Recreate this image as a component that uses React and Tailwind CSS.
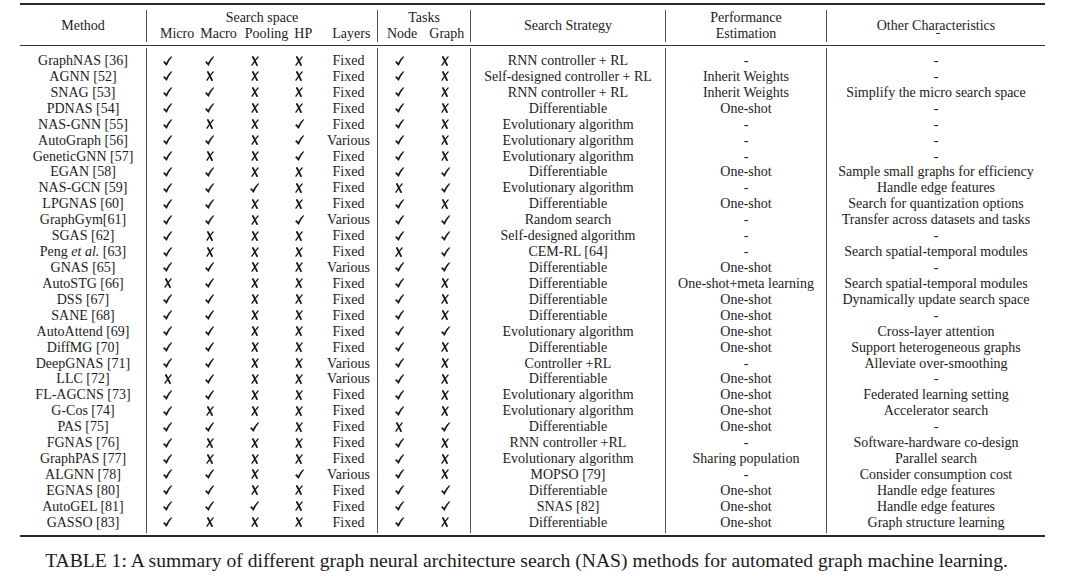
import React from 'react'

// column widths follow the reference: Method | Micro Macro Pooling HP Layers | Node Graph | Strategy | Perf | Other
const COLS = 'grid grid-cols-[126px_42px_43px_47px_42px_57px_43px_50px_195px_161px_219px]'
const LINE = 'border-l border-[#555]'

const rows = [
  ['GraphNAS [36]', '1100', 'Fixed', '10', 'RNN controller + RL', '-', '-'],
  ['AGNN [52]', '1000', 'Fixed', '10', 'Self-designed controller + RL', 'Inherit Weights', '-'],
  ['SNAG [53]', '1100', 'Fixed', '10', 'RNN controller + RL', 'Inherit Weights', 'Simplify the micro search space'],
  ['PDNAS [54]', '1100', 'Fixed', '10', 'Differentiable', 'One-shot', '-'],
  ['NAS-GNN [55]', '1001', 'Fixed', '10', 'Evolutionary algorithm', '-', '-'],
  ['AutoGraph [56]', '1101', 'Various', '10', 'Evolutionary algorithm', '-', '-'],
  ['GeneticGNN [57]', '1001', 'Fixed', '10', 'Evolutionary algorithm', '-', '-'],
  ['EGAN [58]', '1100', 'Fixed', '11', 'Differentiable', 'One-shot', 'Sample small graphs for efficiency'],
  ['NAS-GCN [59]', '1110', 'Fixed', '01', 'Evolutionary algorithm', '-', 'Handle edge features'],
  ['LPGNAS [60]', '1100', 'Fixed', '10', 'Differentiable', 'One-shot', 'Search for quantization options'],
  ['GraphGym[61]', '1101', 'Various', '11', 'Random search', '-', 'Transfer across datasets and tasks'],
  ['SGAS [62]', '1000', 'Fixed', '11', 'Self-designed algorithm', '-', '-'],
  ['peng', '1000', 'Fixed', '01', 'CEM-RL [64]', '-', 'Search spatial-temporal modules'],
  ['GNAS [65]', '1100', 'Various', '11', 'Differentiable', 'One-shot', '-'],
  ['AutoSTG [66]', '0100', 'Fixed', '10', 'Differentiable', 'One-shot+meta learning', 'Search spatial-temporal modules'],
  ['DSS [67]', '1100', 'Fixed', '10', 'Differentiable', 'One-shot', 'Dynamically update search space'],
  ['SANE [68]', '1100', 'Fixed', '10', 'Differentiable', 'One-shot', '-'],
  ['AutoAttend [69]', '1100', 'Fixed', '11', 'Evolutionary algorithm', 'One-shot', 'Cross-layer attention'],
  ['DiffMG [70]', '1100', 'Fixed', '10', 'Differentiable', 'One-shot', 'Support heterogeneous graphs'],
  ['DeepGNAS [71]', '1100', 'Various', '10', 'Controller +RL', '-', 'Alleviate over-smoothing'],
  ['LLC [72]', '0100', 'Various', '10', 'Differentiable', 'One-shot', '-'],
  ['FL-AGCNS [73]', '1100', 'Fixed', '10', 'Evolutionary algorithm', 'One-shot', 'Federated learning setting'],
  ['G-Cos [74]', '1000', 'Fixed', '10', 'Evolutionary algorithm', 'One-shot', 'Accelerator search'],
  ['PAS [75]', '1110', 'Fixed', '01', 'Differentiable', 'One-shot', '-'],
  ['FGNAS [76]', '1000', 'Fixed', '10', 'RNN controller +RL', '-', 'Software-hardware co-design'],
  ['GraphPAS [77]', '1000', 'Fixed', '10', 'Evolutionary algorithm', 'Sharing population', 'Parallel search'],
  ['ALGNN [78]', '1101', 'Various', '10', 'MOPSO [79]', '-', 'Consider consumption cost'],
  ['EGNAS [80]', '1100', 'Fixed', '11', 'Differentiable', 'One-shot', 'Handle edge features'],
  ['AutoGEL [81]', '1110', 'Fixed', '11', 'SNAS [82]', 'One-shot', 'Handle edge features'],
  ['GASSO [83]', '1000', 'Fixed', '10', 'Differentiable', 'One-shot', 'Graph structure learning'],
]

const Check = () => (
  <svg width="9" height="10" viewBox="0 0 9 10">
    <path d="M0.1 6.2 L1.6 5 L3 6.9 Q5 3.1 8.4 0.1 L8.95 1 Q6 4.5 3.6 9.9 Z" fill="#1a1a1a" />
  </svg>
)

const Cross = () => (
  <svg width="8" height="10" viewBox="0 0 8 10">
    <path d="M1.9 1 Q3.9 4.7 6 9.1" stroke="#1a1a1a" strokeWidth="1.8" fill="none" strokeLinecap="round" />
    <path d="M1 9.1 Q3.7 5 7.1 0.9" stroke="#1a1a1a" strokeWidth="1.35" fill="none" strokeLinecap="round" />
  </svg>
)

const Mark = ({ on }) => (on === '1' ? <Check /> : <Cross />)

const Cell = ({ line, children }) => (
  <div className={`flex items-center justify-center whitespace-nowrap ${line ? LINE : ''}`}>{children}</div>
)

const Spacer = ({ h }) => (
  <div className={`${COLS} ${h}`}>
    <div />
    <div className={LINE} />
    <div /><div /><div /><div />
    <div className={LINE} />
    <div />
    <div className={LINE} />
    <div className={LINE} />
    <div className={LINE} />
  </div>
)

const Row = ({ r }) => {
  const [name, space, layers, tasks, strategy, perf, other] = r
  return (
    <div className={`${COLS} h-[15.93px]`}>
      <Cell>
        {name === 'peng' ? (
          <>
            Peng&nbsp;<i>et al.</i>&nbsp;[63]
          </>
        ) : (
          name
        )}
      </Cell>
      <Cell line><Mark on={space[0]} /></Cell>
      <Cell><Mark on={space[1]} /></Cell>
      <Cell><Mark on={space[2]} /></Cell>
      <Cell><Mark on={space[3]} /></Cell>
      <Cell>{layers}</Cell>
      <Cell line><Mark on={tasks[0]} /></Cell>
      <Cell><Mark on={tasks[1]} /></Cell>
      <Cell line>{strategy}</Cell>
      <Cell line>{perf}</Cell>
      <Cell line>{other}</Cell>
    </div>
  )
}

export default function App() {
  return (
    <div className="w-[1080px] h-[582px] bg-white text-[#1c1c1c] font-['Liberation_Serif',serif] text-[14px] overflow-hidden">
      <div className="ml-[20px] w-[1025px] pt-[3px]">
        {/* top rule */}
        <div className="h-[2px] bg-[#2a2a2a]" />
        <div className="h-[5px]" />

        {/* header */}
        <div className={`${COLS} h-[32px] leading-[16px]`}>
          <Cell>Method</Cell>
          <div className={`col-span-5 flex flex-col ${LINE}`}>
            <div className="text-center">Search space</div>
            <div className="flex whitespace-nowrap">
              <span className="ml-[13px]">Micro</span>
              <span className="ml-[6px]">Macro</span>
              <span className="ml-[8px]">Pooling</span>
              <span className="ml-[6px]">HP</span>
              <span className="ml-[20px]">Layers</span>
            </div>
          </div>
          <div className={`col-span-2 flex flex-col ${LINE}`}>
            <div className="text-center">Tasks</div>
            <div className="flex whitespace-nowrap">
              <span className="ml-[9px]">Node</span>
              <span className="ml-[12px]">Graph</span>
            </div>
          </div>
          <Cell line>Search Strategy</Cell>
          <div className={`flex flex-col items-center justify-center ${LINE}`}>
            <div>Performance</div>
            <div>Estimation</div>
          </div>
          <div className={`relative flex items-center justify-center ${LINE}`}>
            Other Characteristics
            <span className="absolute left-[109px] top-[23px] w-[4px] h-px bg-[#333]" />
          </div>
        </div>

        <div className="h-[3px]" />
        <div className="h-px bg-[#333]" />
        <div className="h-[2px]" />

        {/* body */}
        <Spacer h="h-[2px]" />
        {rows.map((r) => (
          <Row key={r[0]} r={r} />
        ))}
        <Spacer h="h-[3px]" />

        <div className="h-[4px]" />
        <div className="h-[2px] bg-[#2a2a2a]" />
      </div>

      <p className="mt-[13px] ml-[20px] w-[1025px] pr-[12px] text-center text-[19.6px] leading-[22px] whitespace-nowrap">
        TABLE 1: A summary of different graph neural architecture search (NAS) methods for automated graph machine learning.
      </p>
    </div>
  )
}
